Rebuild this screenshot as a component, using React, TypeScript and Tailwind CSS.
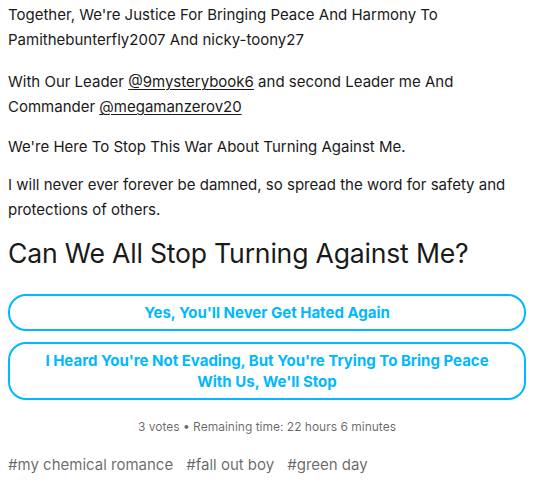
const tags = ["my chemical romance", "fall out boy", "green day"];

export default function App() {
  return (
    <div className="w-[540px] h-[486px] bg-white overflow-hidden px-2 pt-[2px] text-[#1a1a1a] font-['Inter','Noto_Sans',sans-serif]">
      <p className="text-[15px] leading-[25px] mb-[17px]">
        Together, We're Justice For Bringing Peace And Harmony To Pamithebunterfly2007 And nicky-toony27
      </p>
      <p className="text-[15px] leading-[25px] mb-[15px] pr-8">
        With Our Leader <span className="underline underline-offset-2 decoration-1">@9mysterybook6</span> and second Leader me And
        Commander <span className="underline underline-offset-2 decoration-1">@megamanzerov20</span>
      </p>
      <p className="text-[15px] leading-[25px] mb-[13px]">We're Here To Stop This War About Turning Against Me.</p>
      <p className="text-[15px] leading-[25px] pr-2">
        I will never ever forever be damned, so spread the word for safety and protections of others.
      </p>
      <h2 className="text-[26.6px] leading-[36px] mt-[13px] mb-[23px] tracking-[-0.2px]">Can We All Stop Turning Against Me?</h2>
      <div className="flex flex-col gap-[11px] pr-[6px]">
        <button className="w-full border-2 border-[#00b8ff] rounded-[18px] px-6 py-[6px] text-[#00b8ff] font-bold text-[15px] leading-[21px]">
          Yes, You'll Never Get Hated Again
        </button>
        <button className="w-full border-2 border-[#00b8ff] rounded-[18px] px-6 py-[6px] text-[#00b8ff] font-bold text-[15px] leading-[21px]">
          I Heard You're Not Evading, But You're Trying To Bring Peace With Us, We'll Stop
        </button>
      </div>
      <p className="text-center text-[12px] leading-[18px] text-[#00000099] mt-[18px] pr-[6px]">
        3 votes • Remaining time: 22 hours 6 minutes
      </p>
      <div className="flex gap-[13px] mt-[17px] text-[15px] leading-[24px] text-[#00000099]">
        {tags.map((t) => (
          <span key={t}>#{t}</span>
        ))}
      </div>
    </div>
  );
}
